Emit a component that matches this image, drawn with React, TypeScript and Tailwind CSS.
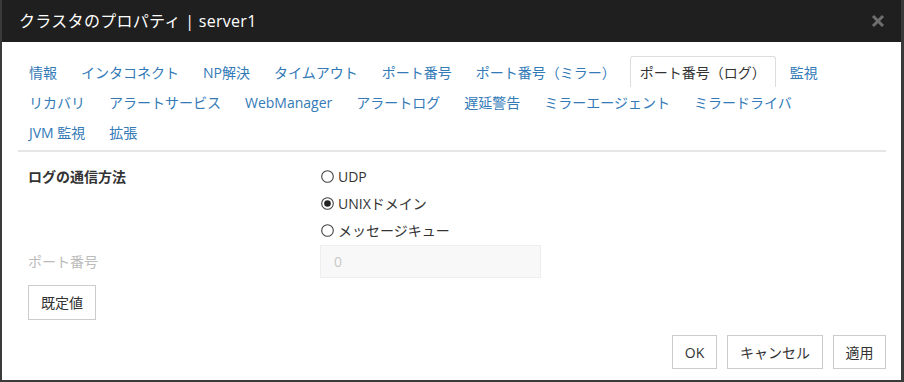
import React from "react";

const row1 = ["情報", "インタコネクト", "NP解決", "タイムアウト", "ポート番号", "ポート番号（ミラー）", "ポート番号（ログ）", "監視"];
const row2 = ["リカバリ", "アラートサービス", "WebManager", "アラートログ", "遅延警告", "ミラーエージェント", "ミラードライバ"];
const row3 = ["JVM 監視", "拡張"];
const ACTIVE = "ポート番号（ログ）";

function Tab({ label }: { label: string }) {
  const active = label === ACTIVE;
  return (
    <div
      className={
        active
          ? "h-[31px] -mt-px px-[9px] mr-[4px] flex items-center border border-b-0 border-[#dddddd] rounded-t-[3px] bg-white text-[#333333] whitespace-nowrap"
          : "h-[30px] px-[10px] mr-[4px] flex items-center text-[#337ab7] whitespace-nowrap"
      }
    >
      {label}
    </div>
  );
}

function Radio({ checked, label }: { checked?: boolean; label: string }) {
  return (
    <div className="h-[27px] flex items-center">
      <svg width="13" height="13" viewBox="0 0 13 13" className="mr-[4px] ml-[1px]">
        <circle cx="6.5" cy="6.5" r="5.8" fill="white" stroke="#444444" strokeWidth="1.1" />
        {checked && <circle cx="6.5" cy="6.5" r="3.3" fill="#222222" />}
      </svg>
      <span className="text-[#333333]">{label}</span>
    </div>
  );
}

export default function App() {
  return (
    <div
      className="w-[904px] h-[382px] flex flex-col bg-white border-l-2 border-r-[3px] border-b-2 border-[#3a3a3a] text-[14px]"
      style={{ fontFamily: '"Open Sans", "Noto Sans CJK JP", sans-serif' }}
    >
      <div className="h-[42px] shrink-0 bg-[#1f1f1f] flex items-center justify-between pl-[17px] pr-[16px]">
        <span className="text-white text-[16px] tracking-[0.3px]">クラスタのプロパティ | server1</span>
        <svg width="14" height="14" viewBox="0 0 14 14">
          <path d="M2 2 L12 12 M12 2 L2 12" stroke="#6e6e6e" strokeWidth="3" strokeLinecap="butt" />
        </svg>
      </div>
      <div className="flex-1 flex flex-col pl-[16px] pr-[15px] pt-[15px]">
        <div className="pl-px flex flex-col">
          <div className="flex">{row1.map((l) => <Tab key={l} label={l} />)}</div>
          <div className="flex">{row2.map((l) => <Tab key={l} label={l} />)}</div>
          <div className="flex">{row3.map((l) => <Tab key={l} label={l} />)}</div>
        </div>
        <div className="mt-[3px] h-[2px] bg-[#e6e6e6]" />
        <div className="pl-[10px] pt-[11px] flex">
          <div className="w-[292px] flex flex-col">
            <div className="h-[27px] flex items-center font-bold text-[#333333]">ログの通信方法</div>
            <div className="h-[54px]" />
            <div className="mt-px h-[33px] flex items-center text-[#bbbbbb]">ポート番号</div>
          </div>
          <div className="flex flex-col">
            <Radio label="UDP" />
            <Radio checked label="UNIXドメイン" />
            <Radio label="メッセージキュー" />
            <div className="mt-px w-[221px] h-[33px] bg-[#f8f8f8] border border-[#eeeeee] flex items-center pl-[13px] text-[#c8c8c8]">
              0
            </div>
          </div>
        </div>
        <div className="pl-[10px] mt-[7px]">
          <button className="w-[68px] h-[35px] border border-[#cccccc] bg-white text-[#333333]">既定値</button>
        </div>
        <div className="mt-[15px] flex justify-end gap-[10px]">
          <button className="w-[45px] h-[34px] border border-[#cccccc] bg-white text-[#333333]">OK</button>
          <button className="w-[96px] h-[34px] border border-[#cccccc] bg-white text-[#333333]">キャンセル</button>
          <button className="w-[53px] h-[34px] border border-[#cccccc] bg-white text-[#333333]">適用</button>
        </div>
      </div>
    </div>
  );
}
